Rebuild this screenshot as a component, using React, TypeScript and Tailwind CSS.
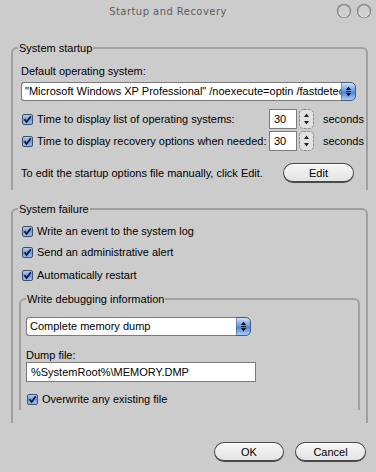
import type { ReactNode } from 'react';

const font = { fontFamily: '"Liberation Sans", Arial, sans-serif' };

const Check = () => (
  <svg width="11" height="11" viewBox="0 0 11 11" className="shrink-0">
    <defs>
      <linearGradient id="cbg" x1="0" y1="0" x2="0" y2="1">
        <stop offset="0" stopColor="#b9d3f2" />
        <stop offset="0.5" stopColor="#6f9ee0" />
        <stop offset="1" stopColor="#9cc2ee" />
      </linearGradient>
    </defs>
    <rect x="0.5" y="0.5" width="10" height="10" rx="1.5" fill="url(#cbg)" stroke="#3e4e6e" />
    <path d="M2.5 5.2 L4.6 8 L8.8 2.2" fill="none" stroke="#141a36" strokeWidth="1.8" />
  </svg>
);

const CheckRow = ({ children, className = '' }: { children: ReactNode; className?: string }) => (
  <div className={`flex items-center gap-[4px] h-[14px] leading-[14px] ${className}`}>
    <Check />
    <span className="whitespace-nowrap">{children}</span>
  </div>
);

const SelectArrow = () => (
  <svg width="15" height="19" viewBox="0 0 15 19" className="shrink-0">
    <defs>
      <linearGradient id="sag" x1="0" y1="0" x2="0" y2="1">
        <stop offset="0" stopColor="#d6e6fa" />
        <stop offset="0.45" stopColor="#6d9ee6" />
        <stop offset="0.55" stopColor="#4f86dc" />
        <stop offset="1" stopColor="#b4d2f6" />
      </linearGradient>
    </defs>
    <path d="M0 0.5 H10 A4.5 4.5 0 0 1 14.5 5 V14 A4.5 4.5 0 0 1 10 18.5 H0 Z" fill="url(#sag)" stroke="#4a5a7a" />
    <polygon points="5,8 7.5,4.5 10,8" fill="#111" />
    <rect x="5" y="9" width="5" height="1" fill="#111" />
    <polygon points="5,11 7.5,14.5 10,11" fill="#111" />
  </svg>
);

const Select = ({ value, width }: { value: string; width: string }) => (
  <div className={`flex h-[19px] ${width}`}>
    <div className="flex-1 min-w-0 overflow-hidden whitespace-nowrap bg-white border border-r-0 border-[#7b7b7b] rounded-l-[3px] pl-[3px] leading-[17px]">
      {value}
    </div>
    <SelectArrow />
  </div>
);

const Spinner = () => (
  <svg width="15" height="20" viewBox="0 0 15 20" className="shrink-0">
    <rect x="0.5" y="0.5" width="14" height="19" rx="4" fill="#e2e2e2" stroke="#8a8a8a" strokeDasharray="3 1" />
    <polygon points="5,8 7.5,4.5 10,8" fill="#222" />
    <polygon points="5,12 7.5,15.5 10,12" fill="#222" />
  </svg>
);

const SpinRow = ({ label }: { label: string }) => (
  <div className="flex items-center h-[20px]">
    <div className="flex items-center gap-[4px] ml-[1px] flex-1">
      <Check />
      <span className="whitespace-nowrap">{label}</span>
    </div>
    <div className="w-[28px] h-[20px] bg-white border border-[#7b7b7b] pl-[4px] leading-[18px]">30</div>
    <div className="ml-[2px]">
      <Spinner />
    </div>
    <span className="ml-[9px] w-[39px] whitespace-nowrap">seconds</span>
  </div>
);

const Button = ({ children, width }: { children: ReactNode; width: string }) => (
  <div
    className={`${width} h-[20px] rounded-full border border-[#4a4a4a] border-b-2 bg-gradient-to-b from-[#f6f6f6] to-[#e4e4e4] flex items-center justify-center leading-[14px] shadow-[inset_0_1px_0_#fff]`}
  >
    {children}
  </div>
);

const Ring = () => (
  <svg width="16" height="16" viewBox="0 0 16 16">
    <circle cx="8" cy="8" r="6.5" fill="#cfcfcf" stroke="#8c8c8c" strokeWidth="1.6" />
    <path d="M3 9 A5 5 0 0 0 13 9" fill="none" stroke="#e6e6e6" strokeWidth="1" />
  </svg>
);

export default function App() {
  return (
    <div className="w-[376px] h-[472px] bg-[#cccccc] text-[11px] text-black flex flex-col overflow-hidden" style={font}>
      {/* title bar */}
      <div className="h-[22px] flex items-center">
        <div
          className="flex-1 text-center text-[#5c5c5c] text-[10px] tracking-[0.45px] pt-[1px]"
          style={{ fontFamily: '"DejaVu Sans", sans-serif' }}
        >
          Startup and Recovery
        </div>
        <div className="flex gap-[4px] pr-[4px]">
          <Ring />
          <Ring />
        </div>
      </div>

      {/* system startup */}
      <fieldset className="ml-[11px] w-[357px] mt-[19px] border-2 border-b-0 border-[#a0a0a0] rounded-tl-[6px] rounded-tr-[6px] px-0">
        <legend className="ml-[5px] px-[1px] leading-[14px]">System startup</legend>
        <div className="pl-[8px] pr-[4px] pb-[7px] flex flex-col">
          <div className="mt-[9px] h-[14px] leading-[14px]">Default operating system:</div>
          <div className="mt-[4px]">
            <Select
              width="w-[335px]"
              value={'"Microsoft Windows XP Professional" /noexecute=optin /fastdetect'}
            />
          </div>
          <div className="mt-[8px]">
            <SpinRow label="Time to display list of operating systems:" />
          </div>
          <div className="mt-[2px]">
            <SpinRow label="Time to display recovery options when needed:" />
          </div>
          <div className="mt-[12px] flex items-center h-[20px]">
            <span className="flex-1 whitespace-nowrap">To edit the startup options file manually, click Edit.</span>
            <div className="mr-[8px]">
              <Button width="w-[71px]">Edit</Button>
            </div>
          </div>
        </div>
      </fieldset>

      {/* system failure */}
      <fieldset className="ml-[11px] w-[357px] mt-[12px] border-2 border-b-0 border-[#a0a0a0] rounded-tl-[6px] rounded-tr-[6px] px-0">
        <legend className="ml-[5px] px-[1px] leading-[14px]">System failure</legend>
        <div className="pl-[6px] pr-[6px] pb-[13px] flex flex-col">
          <CheckRow className="mt-[8px] ml-[3px]">Write an event to the system log</CheckRow>
          <CheckRow className="mt-[7px] ml-[3px]">Send an administrative alert</CheckRow>
          <CheckRow className="mt-[9px] ml-[3px]">Automatically restart</CheckRow>

          <fieldset className="mt-[10px] border-2 border-b-0 border-[#a0a0a0] rounded-tl-[6px] rounded-tr-[6px] px-0">
            <legend className="ml-[5px] px-[1px] leading-[14px]">Write debugging information</legend>
            <div className="pl-[5px] pb-[4px] flex flex-col">
              <div className="mt-[11px]">
                <Select width="w-[225px]" value="Complete memory dump" />
              </div>
              <div className="mt-[12px] h-[14px] leading-[14px]">Dump file:</div>
              <div className="w-[230px] h-[20px] bg-white border border-[#7b7b7b] pl-[4px] leading-[18px]">
                %SystemRoot%\MEMORY.DMP
              </div>
              <CheckRow className="mt-[10px] ml-[1px]">Overwrite any existing file</CheckRow>
            </div>
          </fieldset>
        </div>
      </fieldset>

      {/* buttons */}
      <div className="mt-[19px] flex justify-end gap-[11px] pr-[10px]">
        <Button width="w-[70px]">OK</Button>
        <Button width="w-[71px]">Cancel</Button>
      </div>
    </div>
  );
}
